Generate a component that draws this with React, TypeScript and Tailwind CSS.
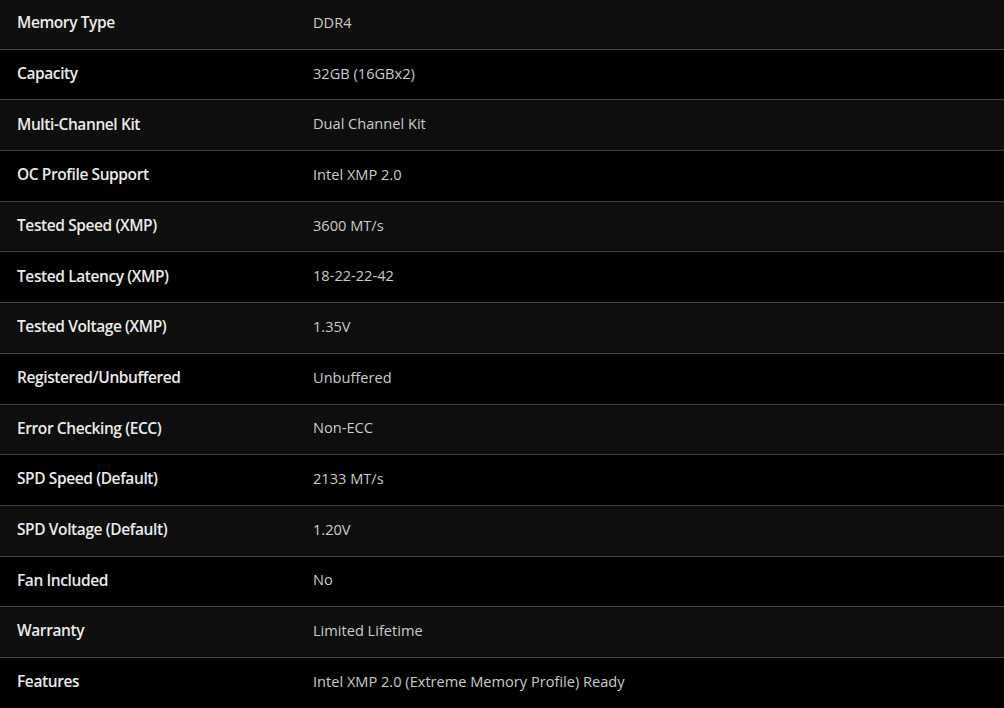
import React from 'react'

const specs: [string, string][] = [
  ['Memory Type', 'DDR4'],
  ['Capacity', '32GB (16GBx2)'],
  ['Multi-Channel Kit', 'Dual Channel Kit'],
  ['OC Profile Support', 'Intel XMP 2.0'],
  ['Tested Speed (XMP)', '3600 MT/s'],
  ['Tested Latency (XMP)', '18-22-22-42'],
  ['Tested Voltage (XMP)', '1.35V'],
  ['Registered/Unbuffered', 'Unbuffered'],
  ['Error Checking (ECC)', 'Non-ECC'],
  ['SPD Speed (Default)', '2133 MT/s'],
  ['SPD Voltage (Default)', '1.20V'],
  ['Fan Included', 'No'],
  ['Warranty', 'Limited Lifetime'],
  ['Features', 'Intel XMP 2.0 (Extreme Memory Profile) Ready'],
]

const App = () => {
  return (
    <div className="w-[1004px] h-[708px] overflow-hidden bg-black font-['Open_Sans',sans-serif]">
      <div className="-mt-[2px]">
        {specs.map(([label, value], i) => (
          <div
            key={label}
            className={`flex items-center h-[50.7px] border-t border-[#404040] pl-[17px] pb-[2px] ${
              i % 2 === 0 ? 'bg-[#0e0e0e]' : 'bg-black'
            }`}
          >
            <div className="w-[296px] text-[15.5px] font-semibold text-[#ebebeb] tracking-[-0.4px]">
              {label}
            </div>
            <div className="text-[14.6px] text-[#cbcbcb]">{value}</div>
          </div>
        ))}
      </div>
    </div>
  )
}

export default App
